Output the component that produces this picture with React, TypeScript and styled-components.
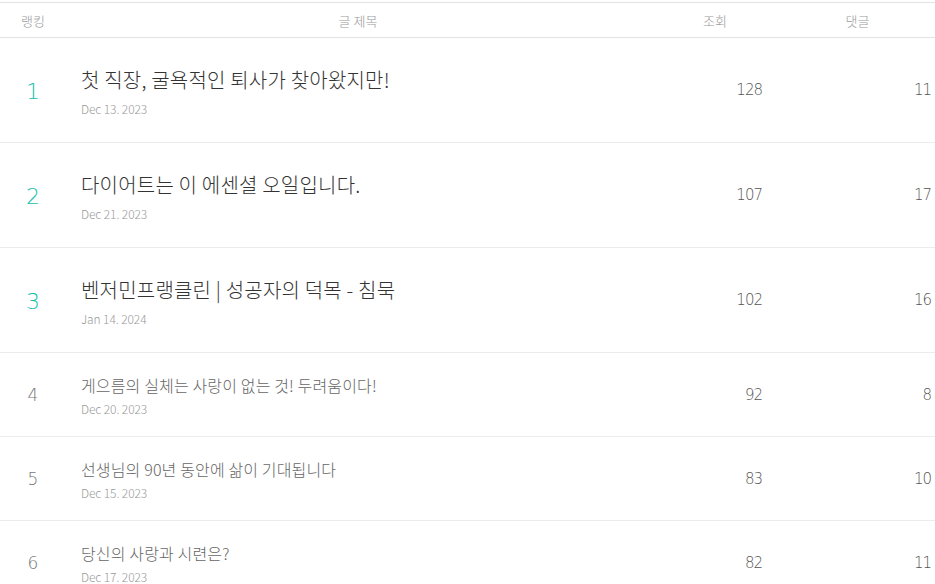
import React from "react";
import styled, { createGlobalStyle } from "styled-components";

interface IPost {
  rank: number;
  title: string;
  date: string;
  views: number;
  comments: number;
}

const posts: IPost[] = [
  { rank: 1, title: "첫 직장, 굴욕적인 퇴사가 찾아왔지만!", date: "Dec 13. 2023", views: 128, comments: 11 },
  { rank: 2, title: "다이어트는 이 에센셜 오일입니다.", date: "Dec 21. 2023", views: 107, comments: 17 },
  { rank: 3, title: "벤저민프랭클린 | 성공자의 덕목 - 침묵", date: "Jan 14. 2024", views: 102, comments: 16 },
  { rank: 4, title: "게으름의 실체는 사랑이 없는 것! 두려움이다!", date: "Dec 20. 2023", views: 92, comments: 8 },
  { rank: 5, title: "선생님의 90년 동안에 삶이 기대됩니다", date: "Dec 15. 2023", views: 83, comments: 10 },
  { rank: 6, title: "당신의 사랑과 시련은?", date: "Dec 17. 2023", views: 82, comments: 11 },
];

const GlobalStyle = createGlobalStyle`
  body {
    margin: 0;
    background: #fff;
    font-family: "Noto Sans CJK KR", "Noto Sans", sans-serif;
    overflow: hidden;
  }
`;

const Table = styled.div`
  margin-top: 2px;
  border-top: 1px solid #e3e3e3;
`;

const HeadRow = styled.div`
  display: grid;
  grid-template-columns: 66px 584px 130px 155px;
  height: 34px;
  align-items: center;
  border-bottom: 1px solid #e3e3e3;
`;

const HeadCell = styled.div`
  text-align: center;
  font-size: 13px;
  font-weight: 300;
  color: #999;
`;

const Row = styled.div<{ $top: boolean }>`
  display: grid;
  grid-template-columns: 66px 584px 130px 155px;
  height: ${(p) => (p.$top ? 104 : 83)}px;
  align-items: center;
  border-bottom: 1px solid #ececec;
`;

const Rank = styled.div<{ $top: boolean }>`
  text-align: center;
  font-family: "DejaVu Sans", sans-serif;
  font-weight: 200;
  font-size: ${(p) => (p.$top ? 22 : 17)}px;
  color: ${(p) => (p.$top ? "#14bfae" : "#777")};
  padding-top: ${(p) => (p.$top ? 2 : 0)}px;
`;

const TitleCell = styled.div`
  padding-left: 15px;
  padding-top: 4px;
  display: flex;
  flex-direction: column;
`;

const Title = styled.div<{ $top: boolean }>`
  font-size: ${(p) => (p.$top ? 20 : 16)}px;
  font-weight: 300;
  color: ${(p) => (p.$top ? "#333" : "#666")};
  line-height: 1.2;
  letter-spacing: ${(p) => (p.$top ? 0.2 : 0.15)}px;
`;

const DateText = styled.div<{ $top: boolean }>`
  margin-top: ${(p) => (p.$top ? 8 : 4)}px;
  font-size: 12px;
  font-weight: 300;
  color: #999;
  letter-spacing: -0.1px;
`;

const Num = styled.div<{ $pad: number }>`
  text-align: right;
  padding-right: ${(p) => p.$pad}px;
  font-family: "DejaVu Sans", sans-serif;
  font-weight: 200;
  font-size: 15px;
  letter-spacing: -1px;
  color: #555;
`;

export default function App() {
  return (
    <>
      <GlobalStyle />
      <Table>
        <HeadRow>
          <HeadCell>랭킹</HeadCell>
          <HeadCell>글 제목</HeadCell>
          <HeadCell>조회</HeadCell>
          <HeadCell>댓글</HeadCell>
        </HeadRow>
        {posts.map((post) => {
          const top = post.rank <= 3;
          return (
            <Row key={post.rank} $top={top}>
              <Rank $top={top}>{post.rank}</Rank>
              <TitleCell>
                <Title $top={top}>{post.title}</Title>
                <DateText $top={top}>{post.date}</DateText>
              </TitleCell>
              <Num $pad={18}>{post.views}</Num>
              <Num $pad={4}>{post.comments}</Num>
            </Row>
          );
        })}
      </Table>
    </>
  );
}
